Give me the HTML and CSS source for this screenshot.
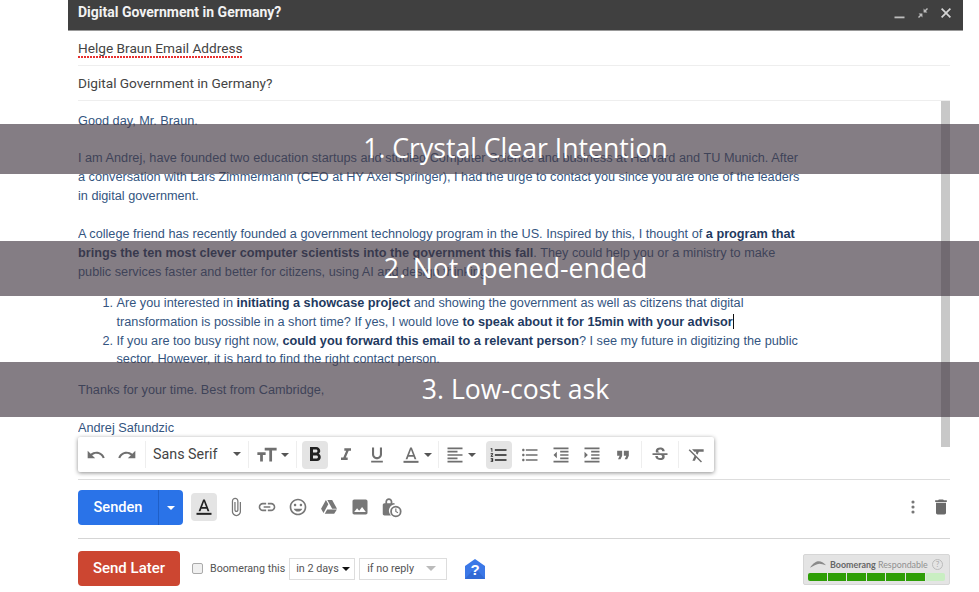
FILE: index.html
```html
<!DOCTYPE html>
<html lang="en">
<head>
<meta charset="utf-8">
<title>Digital Government in Germany?</title>
<link rel="stylesheet" href="styles.css">
</head>
<body>
<main class="compose">
  <header class="titlebar">
    <span class="title">Digital Government in Germany?</span>
    <div class="winctl">
      <svg class="win" viewBox="0 0 12 12"><rect x="0.5" y="9.5" width="10" height="1.8" fill="#bdbdbd"/></svg>
      <svg class="win" viewBox="0 0 12 12"><path fill="#bdbdbd" d="M6.6 5.4V1.6L8 3 10 1l1 1-2 2 1.4 1.4zM5.4 6.6v3.8L4 9l-2 2-1-1 2-2-1.4-1.4z"/></svg>
      <svg class="win" viewBox="0 0 12 12"><path fill="#d5d5d5" d="M2.2 1L1 2.2 4.8 6 1 9.8 2.2 11 6 7.2 9.8 11 11 9.8 7.2 6 11 2.2 9.8 1 6 4.8z"/></svg>
    </div>
  </header>
  <div class="field to"><span class="misspelt">Helge Braun Email Address</span></div>
  <div class="field subj">Digital Government in Germany?</div>

  <section class="message">
    <div class="scrollbar"></div>
    <div class="text">
      <p>Good day, Mr. Braun.</p>
      <p><br>I am Andrej, have founded two education startups and studied Computer Science and business at Harvard and TU Munich. After<br>a conversation with Lars Zimmermann (CEO at HY Axel Springer), I had the urge to contact you since you are one of the leaders<br>in digital government.</p>
      <p><br>A college friend has recently founded a government technology program in the US. Inspired by this, I thought of <b>a program that<br>brings the ten most clever computer scientists into the government this fall</b>. They could help you or a ministry to make<br>public services faster and better for citizens, using AI and design thinking.</p>
      <ol>
        <li>Are you interested in <b>initiating a showcase project</b> and showing the government as well as citizens that digital<br>transformation is possible in a short time? If yes, I would love <b class="caret">to speak about it for 15min with your advisor</b></li>
        <li>If you are too busy right now, <b>could you forward this email to a relevant person</b>? I see my future in digitizing the public<br>sector. However, it is hard to find the right contact person.</li>
      </ol>
      <p>Thanks for your time. Best from Cambridge,</p>
      <p><br>Andrej Safundzic</p>
    </div>
  </section>

  <div class="toolbar">
    <span class="tb"><svg viewBox="0 0 24 24"><path d="M12.5 8c-2.65 0-5.05.99-6.9 2.6L2 7v9h9l-3.62-3.62c1.39-1.16 3.16-1.88 5.12-1.88 3.54 0 6.55 2.31 7.6 5.5l2.37-.78C21.08 11.03 17.15 8 12.5 8z"/></svg></span>
    <span class="tb"><svg viewBox="0 0 24 24"><path d="M18.4 10.6C16.55 8.99 14.15 8 11.5 8c-4.65 0-8.58 3.03-9.96 7.22L3.9 16c1.05-3.19 4.05-5.5 7.6-5.5 1.95 0 3.73.72 5.12 1.88L13 16h9V7l-3.6 3.6z"/></svg></span>
    <i class="div"></i>
    <span class="fontsel">Sans Serif<i class="arrow"></i></span>
    <i class="div nomargin"></i>
    <span class="tb w47"><svg viewBox="0 0 24 24"><path d="M22.5 4v3h-5v12h-3V7h-5V4h13zm-21 5h9v3h-3v7h-3v-7h-3V9z"/></svg><i class="arrow"></i></span>
    <i class="div nomargin"></i>
    <span class="tb on bold"><svg viewBox="0 0 24 24"><path class="dark" d="M15.6 10.79c.97-.67 1.65-1.77 1.65-2.79 0-2.26-1.75-4-4-4H7v14h7.04c2.09 0 3.71-1.7 3.71-3.79 0-1.52-.86-2.82-2.15-3.42zM10 6.5h3c.83 0 1.5.67 1.5 1.5s-.67 1.5-1.5 1.5h-3v-3zm3.5 9H10v-3h3.5c.83 0 1.5.67 1.5 1.5s-.67 1.5-1.5 1.5z"/></svg></span>
    <span class="tb"><svg viewBox="0 0 24 24"><path d="M10 4v3h2.21l-3.42 8H6v3h8v-3h-2.21l3.42-8H18V4z"/></svg></span>
    <span class="tb"><svg viewBox="0 0 24 24"><path d="M12 17c3.31 0 6-2.69 6-6V3h-2.5v8c0 1.93-1.57 3.5-3.5 3.5S8.5 12.93 8.5 11V3H6v8c0 3.31 2.69 6 6 6zm-7 2v2h14v-2H5z"/></svg></span>
    <span class="tb w43"><svg viewBox="0 0 24 24"><path d="M11 3L5.5 17h2.25l1.12-3h6.25l1.12 3h2.25L13 3h-2zm-1.38 9L12 5.67 14.38 12H9.62z"/><rect x="3" y="19" width="18" height="2.4"/></svg><i class="arrow"></i></span>
    <i class="div nomargin"></i>
    <span class="tb w42"><svg viewBox="0 0 24 24"><path d="M15 15H3v2h12v-2zm0-8H3v2h12V7zM3 13h18v-2H3v2zm0 8h18v-2H3v2zM3 3v2h18V3H3z"/></svg><i class="arrow"></i></span>
    <span class="tb on"><svg viewBox="0 0 24 24"><path class="dark" d="M2 17h2v.5H3v1h1v.5H2v1h3v-4H2v1zm1-9h1V4H2v1h1v3zm-1 3h1.8L2 13.1v.9h3v-1H3.2L5 10.9V10H2v1zm5-6v2h14V5H7zm0 14h14v-2H7v2zm0-6h14v-2H7v2z"/></svg></span>
    <span class="tb"><svg viewBox="0 0 24 24"><path d="M4 10.5c-.83 0-1.5.67-1.5 1.5s.67 1.5 1.5 1.5 1.5-.67 1.5-1.5-.67-1.5-1.5-1.5zm0-6c-.83 0-1.5.67-1.5 1.5S3.17 7.5 4 7.5 5.5 6.83 5.5 6 4.83 4.5 4 4.5zm0 12c-.83 0-1.5.68-1.5 1.5s.68 1.5 1.5 1.5 1.5-.68 1.5-1.5-.67-1.5-1.5-1.5zM7 19h14v-2H7v2zm0-6h14v-2H7v2zm0-8v2h14V5H7z"/></svg></span>
    <span class="tb"><svg viewBox="0 0 24 24"><path d="M11 17h10v-2H11v2zm-8-5l4 4V8l-4 4zm0 9h18v-2H3v2zM3 3v2h18V3H3zm8 6h10V7H11v2zm0 4h10v-2H11v2z"/></svg></span>
    <span class="tb"><svg viewBox="0 0 24 24"><path d="M3 21h18v-2H3v2zM3 8v8l4-4-4-4zm8 9h10v-2H11v2zM3 3v2h18V3H3zm8 6h10V7H11v2zm0 4h10v-2H11v2z"/></svg></span>
    <span class="tb"><svg viewBox="0 0 24 24"><path d="M6 17h3l2-4V7H5v6h3zm8 0h3l2-4V7h-6v6h3z"/></svg></span>
    <i class="div nomargin"></i>
    <span class="tb"><svg viewBox="0 0 24 24"><path d="M6.85 7.08C6.85 4.37 9.45 3 12.24 3c1.64 0 3 .49 3.9 1.28.77.65 1.46 1.73 1.46 3.24h-3.01c0-.31-.05-.59-.15-.85-.29-.86-1.2-1.28-2.25-1.28-1.86 0-2.34 1.02-2.34 1.7 0 .48.25.88.74 1.21.38.25.77.48 1.41.7H7.39c-.21-.34-.54-.89-.54-1.92zM21 12v-2H3v2h9.62c1.15.45 1.96.75 1.96 1.97 0 1-.81 1.67-2.28 1.67-1.54 0-2.93-.54-2.93-2.51H6.4c0 .55.08 1.13.24 1.58.81 2.29 3.29 3.3 5.67 3.3 2.27 0 5.3-.89 5.3-4.05 0-.3-.01-1.16-.48-1.96H21z"/></svg></span>
    <i class="div nomargin"></i>
    <span class="tb"><svg viewBox="0 0 24 24"><path d="M3.27 5L2 6.27l6.97 6.97L6.5 19h3l1.57-3.66L16.73 21 18 19.73 3.55 5.27 3.27 5zM6 5v.18L8.82 8h2.4l-.72 1.68 2.1 2.1L14.21 8H20V5H6z"/></svg></span>
  </div>

  <div class="actions">
    <div class="senden"><span class="senden-label">Senden</span><span class="senden-more"><i class="arrow white"></i></span></div>
    <span class="tb act on textcolor"><svg viewBox="0 0 24 24"><path class="dark" d="M11 3L5.5 17h2.25l1.12-3h6.25l1.12 3h2.25L13 3h-2zm-1.38 9L12 5.67 14.38 12H9.62z"/><rect class="dark" x="3" y="19" width="18" height="2.4"/></svg></span>
    <span class="tb act"><svg viewBox="0 0 24 24"><path d="M16.5 6v11.5c0 2.21-1.79 4-4 4s-4-1.79-4-4V5c0-1.38 1.12-2.5 2.5-2.5s2.5 1.12 2.5 2.5v10.5c0 .55-.45 1-1 1s-1-.45-1-1V6H10v9.5c0 1.38 1.12 2.5 2.5 2.5s2.5-1.12 2.5-2.5V5c0-2.21-1.79-4-4-4S7 2.79 7 5v12.5c0 3.04 2.46 5.5 5.5 5.5s5.5-2.46 5.5-5.5V6h-1.5z"/></svg></span>
    <span class="tb act"><svg viewBox="0 0 24 24"><path d="M3.9 12c0-1.71 1.39-3.1 3.1-3.1h4V7H7c-2.76 0-5 2.24-5 5s2.24 5 5 5h4v-1.9H7c-1.71 0-3.1-1.39-3.1-3.1zM8 13h8v-2H8v2zm9-6h-4v1.9h4c1.71 0 3.1 1.39 3.1 3.1s-1.39 3.1-3.1 3.1h-4V17h4c2.76 0 5-2.24 5-5s-2.24-5-5-5z"/></svg></span>
    <span class="tb act"><svg viewBox="0 0 24 24"><path d="M11.99 2C6.47 2 2 6.48 2 12s4.47 10 9.99 10C17.52 22 22 17.52 22 12S17.52 2 11.99 2zM12 20c-4.42 0-8-3.58-8-8s3.58-8 8-8 8 3.58 8 8-3.58 8-8 8zm3.5-9c.83 0 1.5-.67 1.5-1.5S16.33 8 15.5 8 14 8.67 14 9.5s.67 1.5 1.5 1.5zm-7 0c.83 0 1.5-.67 1.5-1.5S9.33 8 8.5 8 7 8.67 7 9.5 7.67 11 8.5 11zm3.5 6.5c2.33 0 4.31-1.46 5.11-3.5H6.89c.8 2.04 2.78 3.5 5.11 3.5z"/></svg></span>
    <span class="tb act"><svg viewBox="0 0 24 24"><path d="M8.3 3.5L2.5 14l2.9 5.2L11.2 8.7zM9.8 15l-2.9 5.2h11.3L21.5 15zM21.6 14L15.8 3.5H10l5.8 10.5z"/></svg></span>
    <span class="tb act"><svg viewBox="0 0 24 24"><path d="M21 19V5c0-1.1-.9-2-2-2H5c-1.1 0-2 .9-2 2v14c0 1.1.9 2 2 2h14c1.1 0 2-.9 2-2zM8.5 13.5l2.5 3.01L14.5 12l4.5 6H5l3.5-4.5z"/></svg></span>
    <span class="tb act lockclock"><svg viewBox="0 0 24 24"><path d="M9 1.5C6.8 1.5 5 3.3 5 5.5V7H4c-1.1 0-2 .9-2 2v10c0 1.1.9 2 2 2h7.3A7.5 7.5 0 0 1 16 8.2 2 2 0 0 0 14 7h-1V5.500c0-2.200-1.800-4-4-4zM7 5.500c0-1.100.9-2 2-2s2 .9 2 2V7H7V5.500z"/><path d="M17 10a6.500 6.500 0 1 0 0 13 6.500 6.500 0 0 0 0-13zm0 11a4.500 4.500 0 1 1 0-9 4.500 4.500 0 0 1 0 9zm.6-7.800h-1.300v3.600l2.800 1.700.6-1-2.100-1.300z"/></svg></span>
    <span class="spacer"></span>
    <span class="tb act more"><svg viewBox="0 0 24 24"><circle cx="12" cy="6" r="1.9"/><circle cx="12" cy="12" r="1.9"/><circle cx="12" cy="18" r="1.9"/></svg></span>
    <span class="tb act last"><svg viewBox="0 0 24 24"><path d="M6 19c0 1.1.9 2 2 2h8c1.1 0 2-.9 2-2V7H6v12zM19 4h-3.5l-1-1h-5l-1 1H5v2h14V4z"/></svg></span>
  </div>

  <div class="boomerang">
    <span class="sendlater">Send Later</span>
    <span class="check"></span>
    <span class="blabel">Boomerang this</span>
    <span class="sel days">in 2 days<i class="arrow small"></i></span>
    <span class="sel reply">if no reply<i class="arrow small pale"></i></span>
    <svg class="help" viewBox="0 0 20 20"><path fill="#3b78e7" d="M10 0L20 7v13H0V7z"/><path fill="#2a5fc4" d="M0 20l7-8 3 2 3-2 7 8z" opacity=".55"/><text x="10" y="16" class="helpq">?</text></svg>
    <span class="spacer"></span>
    <div class="respond">
      <div class="respond-top">
        <svg class="brow" viewBox="0 0 20 8"><path fill="#8a8a8a" d="M0 8C4 2 8 0 11 0c3 0 6 2 9 5-3-1-6-2-8-2-4 0-8 3-12 5z"/></svg>
        <span class="rname"><b>Boomerang</b> Respondable</span>
        <span class="rq">?</span>
      </div>
      <div class="meter">
        <i></i><i></i><i></i><i></i><i></i><i></i><i class="rest"></i>
      </div>
    </div>
  </div>
</main>

<div class="band band1">1. Crystal Clear Intention</div>
<div class="band band2">2. Not opened-ended</div>
<div class="band band3">3. Low-cost ask</div>
</body>
</html>
```

FILE: styles.css
```css
* { box-sizing: border-box; }
html, body { margin: 0; padding: 0; height: 592px; overflow: hidden; background: #fff; }
body { position: relative; font-family: Roboto, "Liberation Sans", sans-serif; color: #333; }

.compose { position: relative; margin-left: 68px; width: 895px; }

.titlebar { height: 31px; background: #404040; border-bottom: 1px solid #999; display: flex; align-items: center; justify-content: space-between; padding: 0 11px 6px 10px; }
.title { color: #f2f2f2; font-weight: 700; font-size: 14px; line-height: 24px; }
.winctl { display: flex; gap: 11px; margin-top: 2px; }
.win { width: 12px; height: 12px; display: block; }

.field { height: 35px; margin: 0 13px 0 10px; border-bottom: 1px solid #eee; font-size: 13.65px; line-height: 33px; color: #444; }
.to { padding-top: 1px; }
.subj { padding-top: 1px; }
.misspelt { padding-bottom: 2px; background: repeating-linear-gradient(90deg, #e8302f 0 2px, #fff 2px 3px) left bottom / 100% 2px no-repeat; }

.message { position: relative; height: 346px; margin: 0 13px 0 10px; overflow: hidden; }
.scrollbar { position: absolute; right: 0; top: 0; width: 9px; height: 346px; background: #c8c8c8; }
.text { padding-top: 10.6px; font-family: "Liberation Sans", Arial, sans-serif; font-size: 12.71px; line-height: 18.9px; color: #34557f; }
.text p { margin: 0; white-space: nowrap; }
.text ol { margin: 12px 0; padding-left: 38.5px; white-space: nowrap; }
.text b { color: #1f3a5f; }
.caret { border-right: 1px solid #111; }

.toolbar { position: absolute; left: 10px; top: 437px; width: 636px; height: 35px; background: #fff; display: flex; align-items: center; gap: 5px; padding: 0 4px 0 5px; border-radius: 2px; box-shadow: 0 1px 4px rgba(0,0,0,.45); }
.tb { flex: none; width: 26px; height: 28px; display: flex; align-items: center; justify-content: center; border-radius: 4px; }
.tb svg { width: 20px; height: 20px; display: block; fill: #6f6f6f; }
.tb .dark { fill: #222; }
.tb.on { background: #e4e4e4; }
.bold svg { width: 24px; height: 24px; }
.w47 { width: 47px; margin: 0 -5px; gap: 3px; }
.w47 svg { width: 22px; height: 22px; }
.w43 { width: 43px; margin-right: -5px; gap: 3px; }
.w42 { width: 42px; margin: 0 0 0 -5px; gap: 3px; }
.div { flex: none; width: 1px; height: 27px; background: #eee; }
.nomargin { margin: 0; }
.fontsel { flex: none; width: 102px; height: 28px; margin: 0 -5px; padding: 0 7px 2px 7px; display: flex; align-items: center; justify-content: space-between; font-size: 14.3px; color: #444; }
.arrow { flex: none; width: 0; height: 0; border-left: 4.5px solid transparent; border-right: 4.5px solid transparent; border-top: 4.5px solid #555; }
.arrow.white { border-top-color: #fff; }
.arrow.small { border-left-width: 4px; border-right-width: 4px; border-top-width: 4px; border-top-color: #111; }
.arrow.pale { border-left-width: 5px; border-right-width: 5px; border-top-width: 5px; border-top-color: #bbb; }

.actions { margin: 32px 13px 0 10px; padding-top: 10px; border-top: 1px solid #ddd; height: 60px; border-bottom: 1px solid #d5d5d5; display: flex; align-items: flex-start; gap: 5px; }
.senden { flex: none; width: 105px; height: 35px; background: #2a73e8; border-radius: 4px; display: flex; color: #fff; font-size: 14.6px; font-weight: 500; margin-right: 3px; }
.senden-label { flex: 1; text-align: center; line-height: 35px; border-right: 1px solid #1f5fc7; }
.senden-more { width: 24px; display: flex; align-items: center; justify-content: center; }
.act { height: 28px; margin-top: 3px; }
.act svg { fill: #777; }
.textcolor { margin-right: 1px; }
.lockclock svg { width: 21px; height: 21px; }
.more { margin-right: -3px; }
.last svg { fill: #6a6a6a; }
.last { margin-right: -4px; }
.spacer { flex: 1; }

.boomerang { margin: 12px 13px 0 10px; display: flex; align-items: center; height: 35px; }
.sendlater { flex: none; width: 102px; height: 35px; background: #cc4631; border-radius: 4px; color: #fff; font-size: 15px; font-weight: 500; line-height: 35px; text-align: center; }
.check { flex: none; width: 11px; height: 11px; margin: 0 7px 0 12px; background: #f0f0f0; border: 1px solid #aaa; border-radius: 2px; }
.blabel { font-size: 10.7px; color: #555; white-space: nowrap; margin-right: 4px; }
.sel { flex: none; height: 22px; border: 1px solid #ddd; display: flex; align-items: center; justify-content: space-between; font-size: 10.8px; color: #555; background: #fff; }
.days { width: 66px; padding: 0 4px 0 6px; margin-right: 4px; }
.reply { width: 88px; padding: 0 10px 0 7px; }
.help { flex: none; width: 20px; height: 20px; margin-left: 18px; }
.helpq { fill: #fff; font-family: "Liberation Sans", sans-serif; font-weight: 700; font-size: 15px; text-anchor: middle; }

.respond { flex: none; width: 147px; height: 31px; background: #e4e4e4; border: 1px solid #d6d6d6; border-radius: 2px; padding: 2px 4px; margin-top: 2px; }
.respond-top { display: flex; align-items: center; height: 15px; }
.brow { width: 16px; height: 7px; margin: 0 4px 0 2px; }
.rname { flex: 1; font-family: Lato, sans-serif; font-size: 8.9px; color: #909090; white-space: nowrap; }
.rname b { color: #666; }
.rq { width: 11px; height: 11px; border: 1px solid #bbb; border-radius: 50%; font-family: Lato, sans-serif; font-size: 8px; line-height: 9px; text-align: center; color: #aaa; margin-right: 2px; }
.meter { display: flex; height: 8px; margin-top: 1px; gap: 1px; border-radius: 2px; overflow: hidden; }
.meter i { flex: none; width: 18.6px; background: #2e9e06; }
.meter .rest { flex: 1; background: #c9eec2; }

.band { position: absolute; left: 0; width: 979px; background: rgba(68,58,68,.66); color: #fff; font-family: "Open Sans", sans-serif; font-size: 26.6px; text-align: center; padding-left: 52px; display: flex; align-items: center; justify-content: center; }
.band1 { top: 124px; height: 50px; padding-bottom: 2px; }
.band2 { top: 241px; height: 55px; padding-bottom: 2px; }
.band3 { top: 362px; height: 55px; padding-bottom: 1px; }
```
